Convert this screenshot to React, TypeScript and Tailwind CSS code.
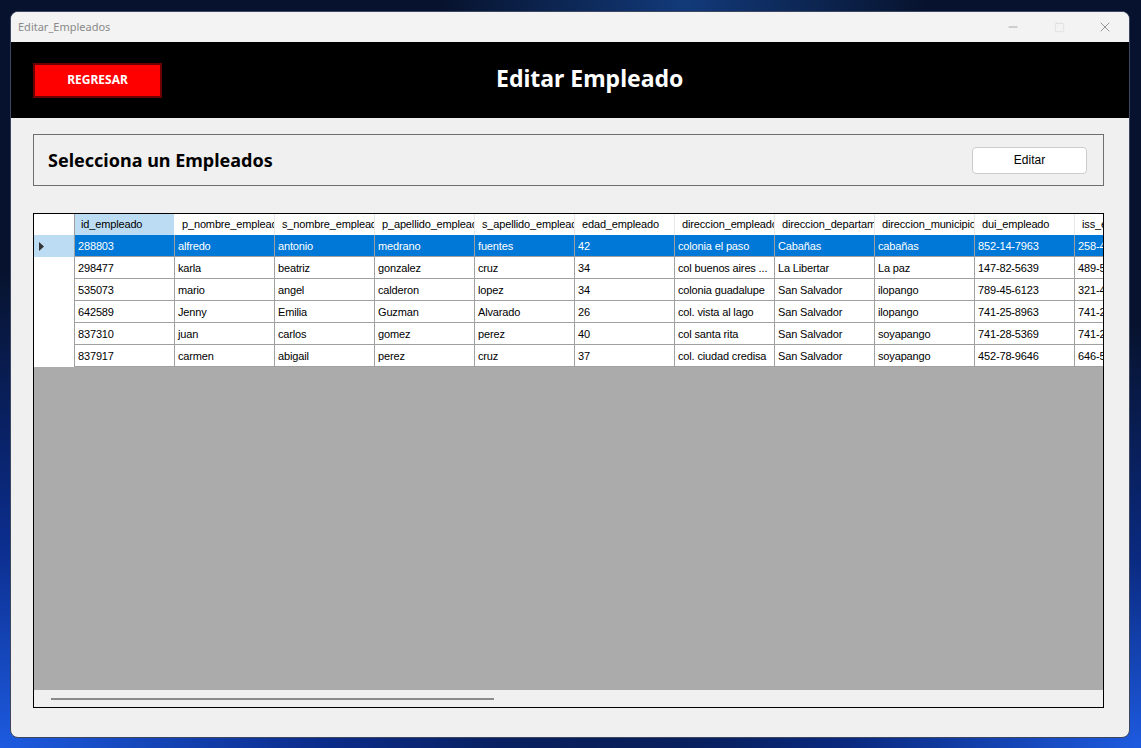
import { Minus, Square, X } from "lucide-react";

const columns = [
    "id_empleado",
    "p_nombre_empleado",
    "s_nombre_empleado",
    "p_apellido_empleado",
    "s_apellido_empleado",
    "edad_empleado",
    "direccion_empleado",
    "direccion_departamento",
    "direccion_municipio",
    "dui_empleado",
    "iss_empleado",
];

const rows = [
    ["288803", "alfredo", "antonio", "medrano", "fuentes", "42", "colonia el paso", "Cabañas", "cabañas", "852-14-7963", "258-47-1236"],
    ["298477", "karla", "beatriz", "gonzalez", "cruz", "34", "col buenos aires ...", "La Libertar", "La paz", "147-82-5639", "489-56-3217"],
    ["535073", "mario", "angel", "calderon", "lopez", "34", "colonia guadalupe", "San Salvador", "ilopango", "789-45-6123", "321-45-9874"],
    ["642589", "Jenny", "Emilia", "Guzman", "Alvarado", "26", "col. vista al lago", "San Salvador", "ilopango", "741-25-8963", "741-25-8963"],
    ["837310", "juan", "carlos", "gomez", "perez", "40", "col santa rita", "San Salvador", "soyapango", "741-28-5369", "741-28-5369"],
    ["837917", "carmen", "abigail", "perez", "cruz", "37", "col. ciudad credisa", "San Salvador", "soyapango", "452-78-9646", "646-58-1234"],
];

function EmployeeGrid() {
    return (
        <div className="mt-[27px] flex h-[495px] w-[1071px] flex-col border border-black bg-[#ababab] font-['Liberation_Sans',sans-serif] text-[11px] tracking-[-0.15px]">
            <div className="flex-1 overflow-hidden">
                {/* header */}
                <div className="flex h-[21px] bg-white">
                    <div className="w-[41px] shrink-0 border-r border-[#a0a0a0] bg-white" />
                    {columns.map((col, i) => (
                        <div
                            key={col}
                            className={
                                i === 0
                                    ? "flex w-[100px] shrink-0 items-center overflow-hidden whitespace-nowrap border-r border-white bg-[#bcdcf4] pl-[6px] text-black"
                                    : "flex w-[100px] shrink-0 items-center overflow-hidden whitespace-nowrap border-r border-[#e8e8e8] bg-white pl-[7px] text-black"
                            }
                        >
                            {col}
                        </div>
                    ))}
                </div>
                {rows.map((row, r) => (
                    <div key={row[0]} className="flex h-[22px]">
                        <div
                            className={
                                r === 0
                                    ? "flex w-[41px] shrink-0 items-center border-r border-[#a0a0a0] bg-[#bcdcf4] pl-[5px]"
                                    : "w-[41px] shrink-0 border-r border-[#a0a0a0] bg-white"
                            }
                        >
                            {r === 0 && (
                                <svg width="5" height="9" viewBox="0 0 5 9">
                                    <path d="M0 0 L5 4.5 L0 9 Z" fill="#333" />
                                </svg>
                            )}
                        </div>
                        {row.map((cell, c) => (
                            <div
                                key={c}
                                className={
                                    r === 0
                                        ? "flex w-[100px] shrink-0 items-center overflow-hidden whitespace-nowrap border-r border-b border-[#a0a0a0] bg-[#0078d7] pl-[3px] pt-[1px] text-white"
                                        : "flex w-[100px] shrink-0 items-center overflow-hidden whitespace-nowrap border-r border-b border-[#a0a0a0] bg-white pl-[3px] pt-[1px] text-black"
                                }
                            >
                                {cell}
                            </div>
                        ))}
                    </div>
                ))}
            </div>
            {/* horizontal scrollbar */}
            <div className="flex h-[17px] shrink-0 items-center bg-[#f0f0f0] pl-[17px]">
                <div className="h-[2px] w-[443px] bg-[#8a8a8a]" />
            </div>
        </div>
    );
}

export default function App() {
    return (
        <div className="relative h-[748px] w-[1141px] overflow-hidden bg-[#07132e] bg-[radial-gradient(ellipse_at_60%_0%,#123a7a_0%,transparent_25%),radial-gradient(ellipse_at_0%_100%,#1d5be0_0%,#0b2c8a_20%,transparent_45%),radial-gradient(ellipse_at_100%_100%,#1d5be0_0%,#0a2a80_18%,transparent_40%)] pt-[11px] pl-[10px]">
            <div className="flex h-[727px] w-[1120px] flex-col overflow-hidden rounded-[8px] border border-[#3c4660] bg-[#f0f0f0]">
                {/* title bar */}
                <div className="flex h-[30px] shrink-0 items-center bg-[#f3f3f3] pl-[7px] font-['Noto_Sans',sans-serif] text-[11px] text-[#8a8a8a]">
                    <span>Editar_Empleados</span>
                    <div className="ml-auto flex items-center">
                        <div className="flex w-[46px] justify-center">
                            <Minus className="h-[14px] w-[14px] text-[#777]" strokeWidth={1} />
                        </div>
                        <div className="flex w-[46px] justify-center">
                            <Square className="h-[11px] w-[11px] text-[#ccc]" strokeWidth={1} />
                        </div>
                        <div className="mr-[1px] flex w-[46px] justify-center">
                            <X className="h-[16px] w-[16px] text-[#666]" strokeWidth={1} />
                        </div>
                    </div>
                </div>

                {/* header */}
                <div className="flex h-[76px] shrink-0 items-center bg-black pl-[22px]">
                    <button className="h-[35px] w-[129px] border-2 border-[#6b0000] bg-[#ff0000] font-['Noto_Sans',sans-serif] text-[12px] font-bold text-white">
                        REGRESAR
                    </button>
                    <h1 className="mb-[4px] ml-[334px] font-['Noto_Sans',sans-serif] text-[23px] font-bold text-white">
                        Editar Empleado
                    </h1>
                </div>

                {/* content */}
                <div className="flex flex-col px-[22px] pt-[16px]">
                    <div className="flex h-[52px] w-[1071px] items-center border border-[#6e6e6e] pl-[14px] pr-[16px]">
                        <h2 className="font-['Noto_Sans',sans-serif] text-[18px] font-bold text-black">
                            Selecciona un Empleados
                        </h2>
                        <button className="ml-auto h-[27px] w-[115px] rounded-[4px] border border-[#cccccc] bg-white font-['Liberation_Sans',sans-serif] text-[12px] text-black">
                            Editar
                        </button>
                    </div>
                    <EmployeeGrid />
                </div>
            </div>
        </div>
    );
}
